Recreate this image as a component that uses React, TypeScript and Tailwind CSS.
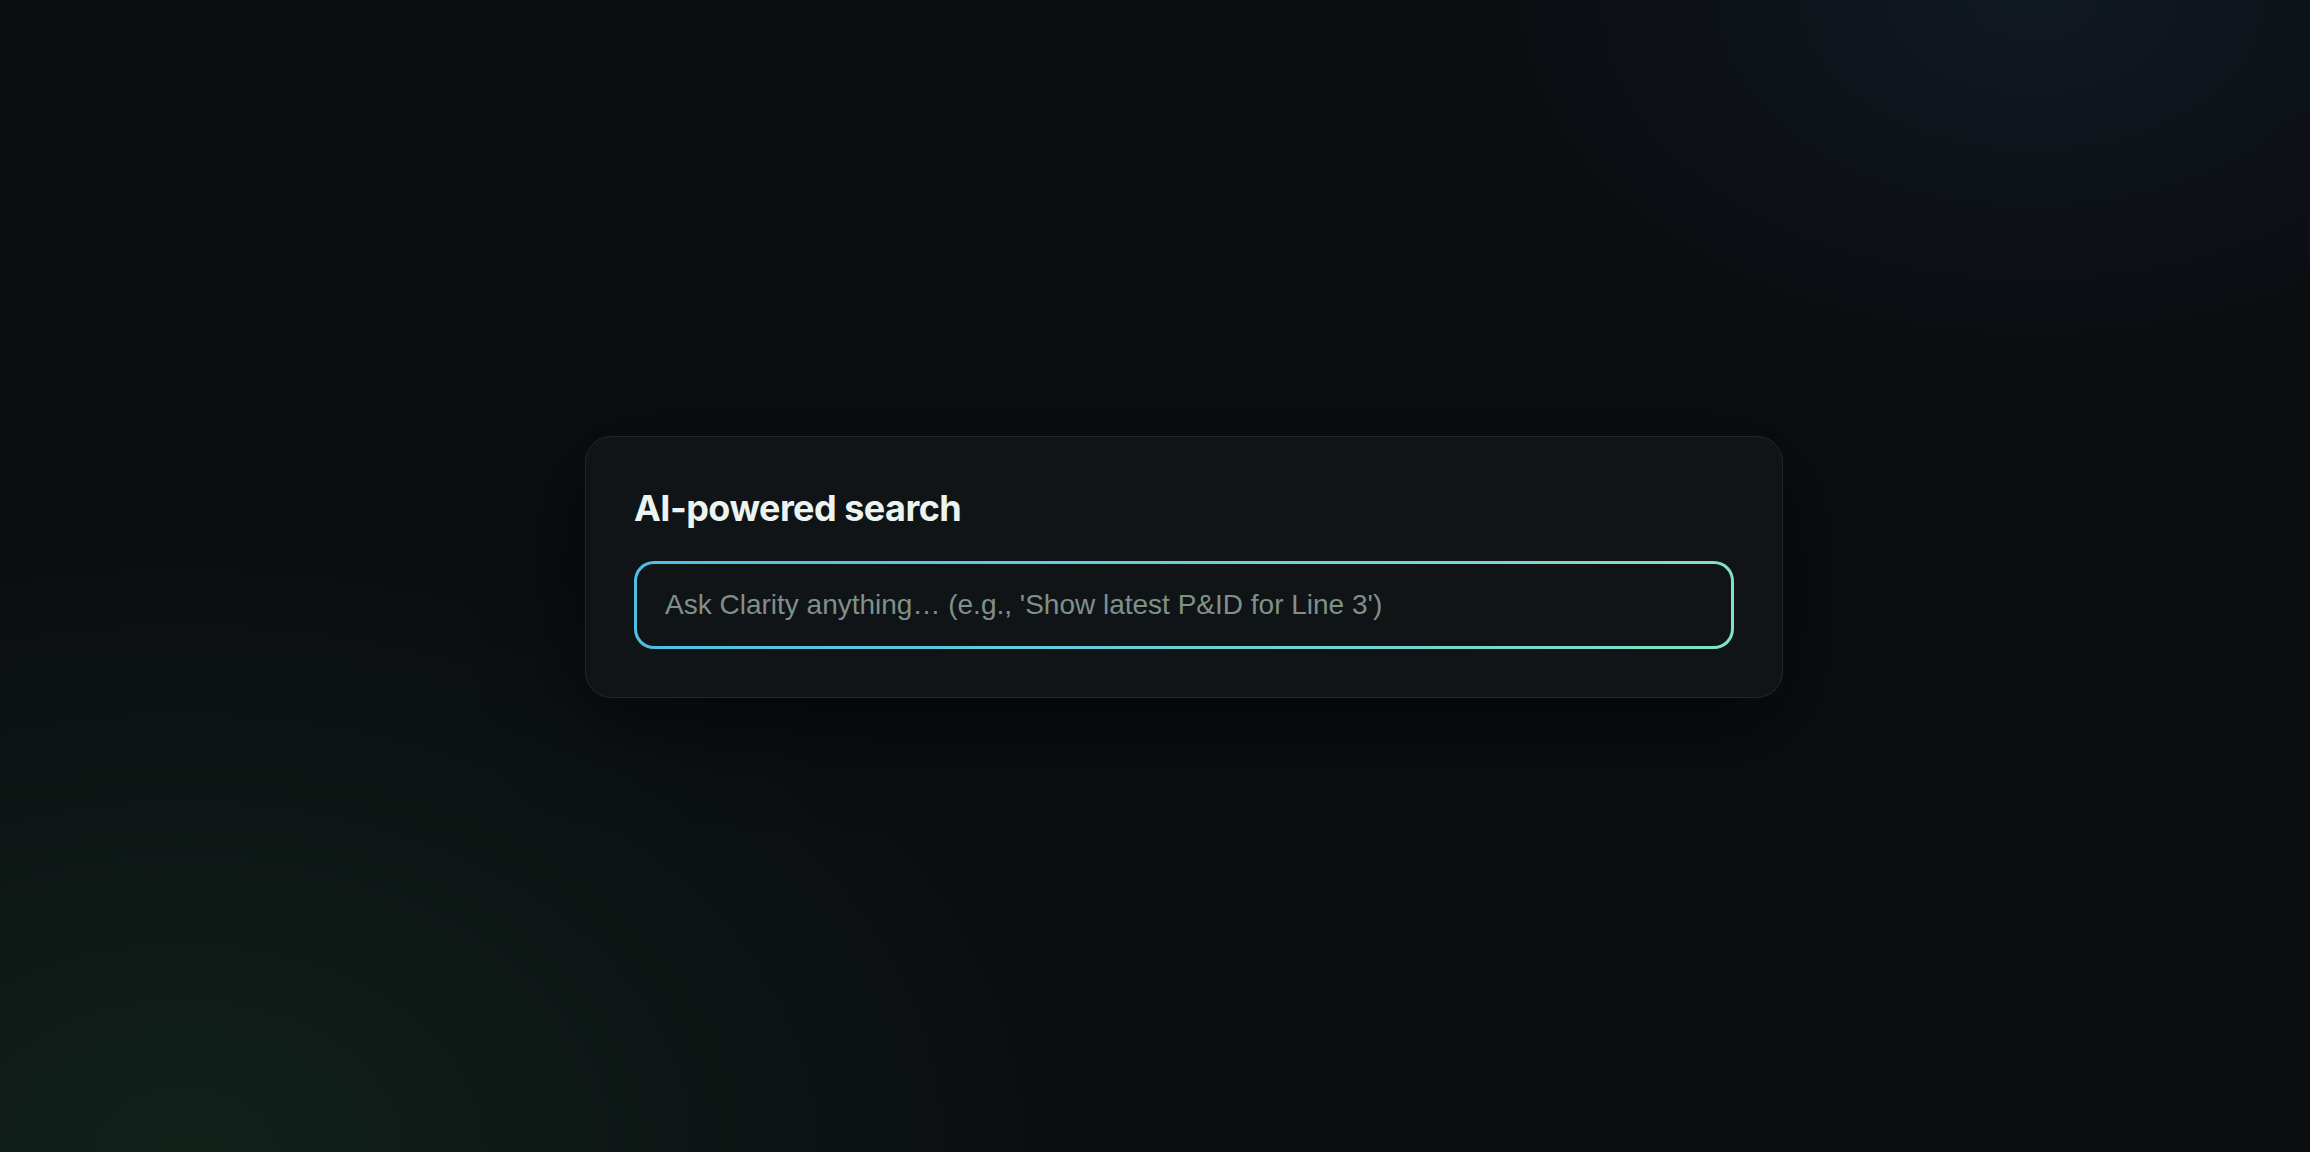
import type { FC } from 'react';

const App: FC = () => {
  return (
    <div className="min-h-screen w-full bg-[#0b0d10] bg-[radial-gradient(ellipse_1300px_900px_at_8%_100%,rgba(20,46,32,0.6),transparent_70%),radial-gradient(ellipse_800px_520px_at_88%_0%,rgba(22,36,52,0.5),transparent_70%)] flex items-center justify-center pl-[58px] pb-[18px]">
      <div className="w-[1198px] rounded-[26px] border border-[#23272b] bg-[#111417] p-12 shadow-[0_24px_90px_rgba(0,0,0,0.55)]">
        <h2 className="font-['Inter',sans-serif] text-[36px] leading-[46px] font-bold tracking-[-0.015em] text-[#ebf4f0] mb-[30px]">
          AI-powered search
        </h2>
        <div className="rounded-[20px] bg-gradient-to-r from-[#50bfe4] to-[#7fe1c4] p-[3px]">
          <input
            type="text"
            placeholder="Ask Clarity anything… (e.g., 'Show latest P&ID for Line 3')"
            className="block w-full h-[82px] rounded-[17px] bg-[#111417] px-[28px] font-['Liberation_Sans',Arial,sans-serif] text-[28px] text-[#dfe8e4] placeholder:text-[#7f908a] outline-none"
          />
        </div>
      </div>
    </div>
  );
};

export default App;
